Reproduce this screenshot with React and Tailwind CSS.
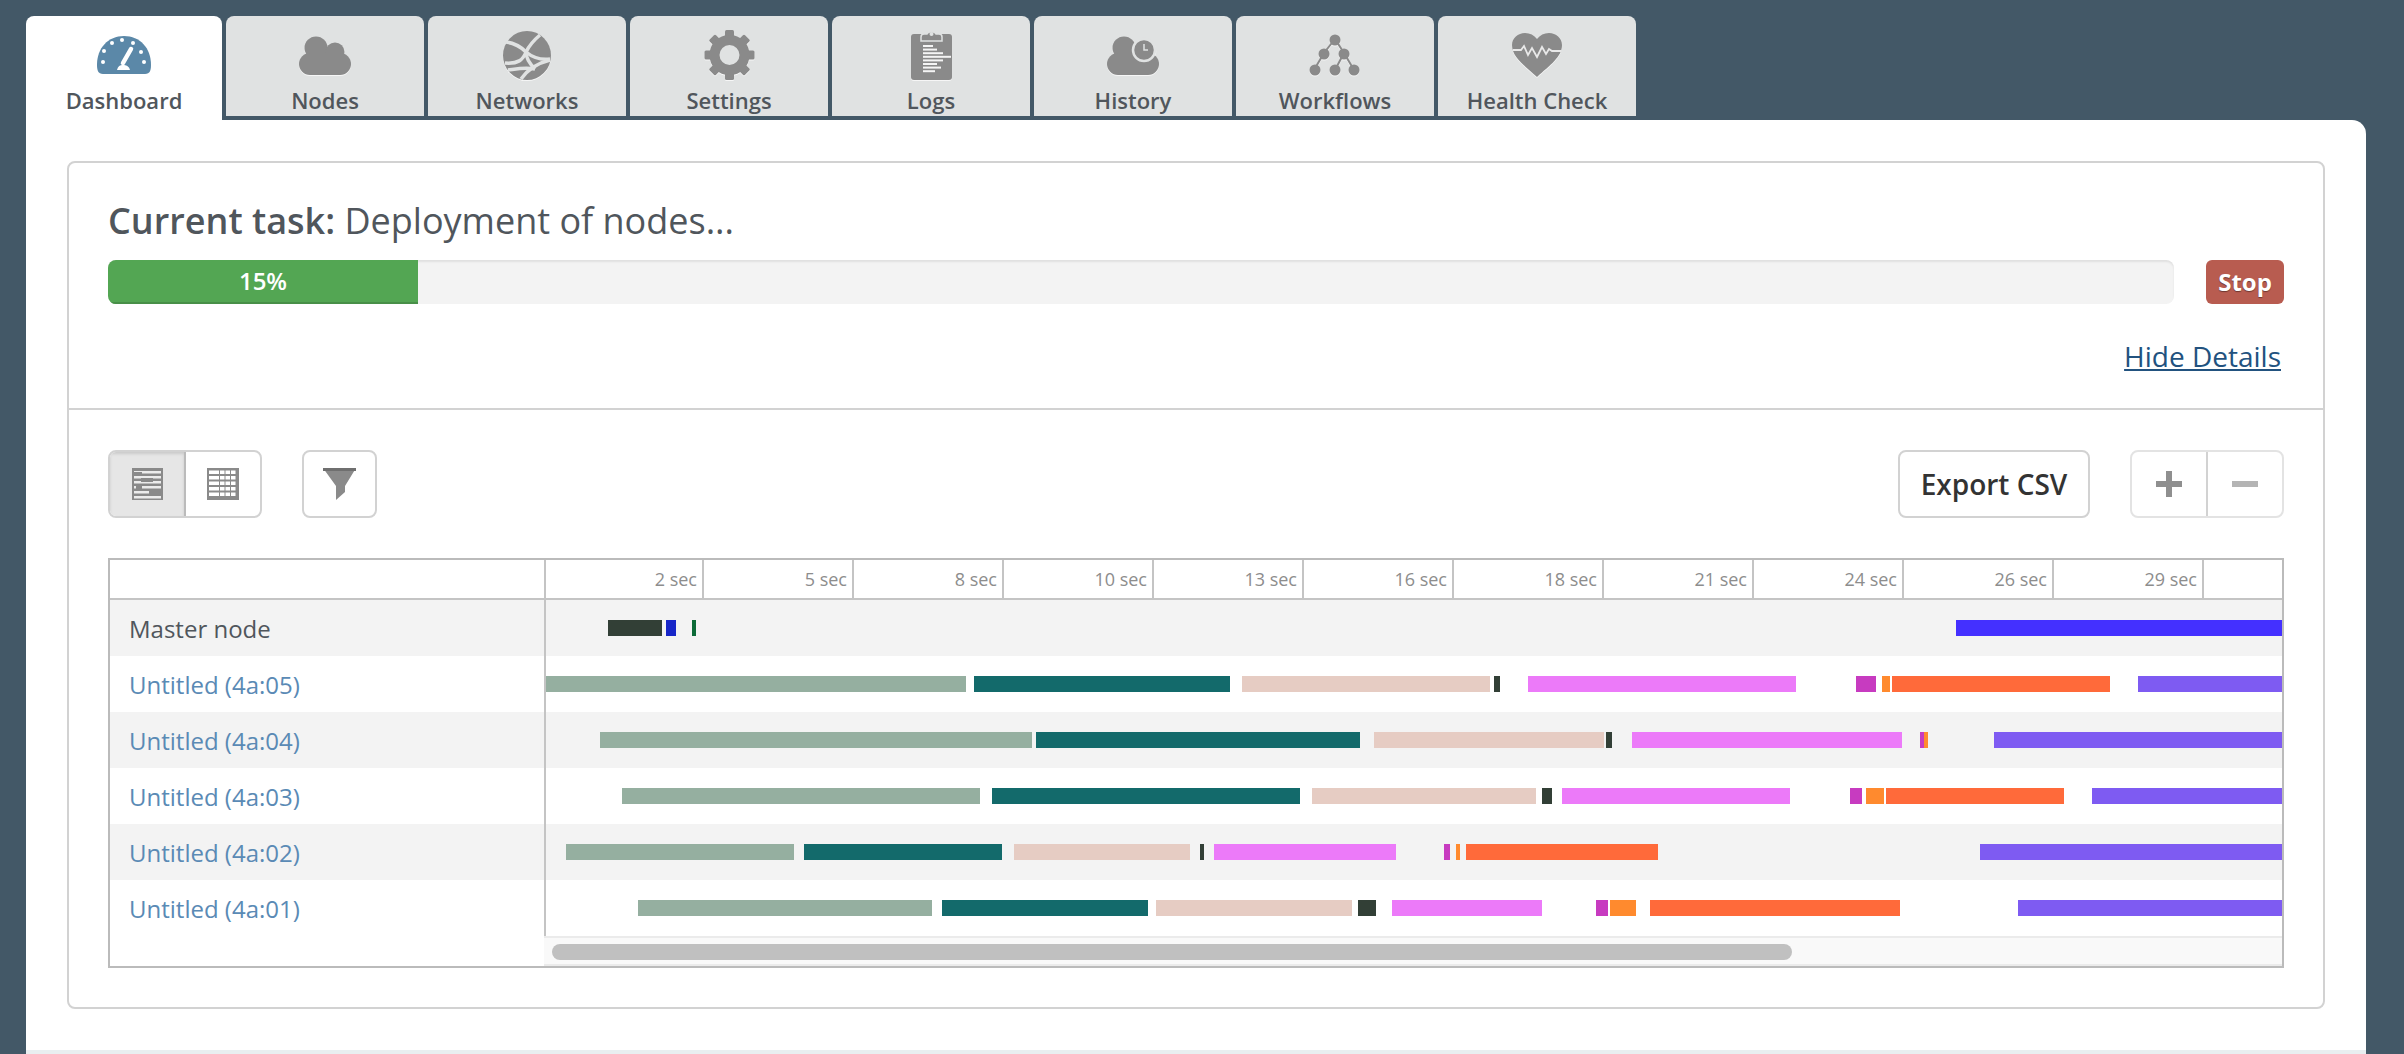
import { Fragment } from 'react';

const C = {
  sage: 'bg-[#95afa0]',
  teal: 'bg-[#136a6b]',
  pink: 'bg-[#e6ccc3]',
  dark: 'bg-[#323f36]',
  magenta: 'bg-[#ec7af9]',
  purple: 'bg-[#c73bc0]',
  orange: 'bg-[#ff8a2e]',
  red: 'bg-[#ff6a3a]',
  violet: 'bg-[#7e5bf2]',
  blue: 'bg-[#1726c8]',
  green: 'bg-[#0c6a37]',
  indigo: 'bg-[#4430ff]',
};

// bar coordinates are page x positions, converted to row offsets below
const CHART_X = 546;
const ROWS = [
  { name: 'Master node', master: true, bars: [['dark', 608, 662], ['blue', 666, 676], ['green', 692, 696], ['indigo', 1956, 2283]] },
  { name: 'Untitled (4a:05)', bars: [['sage', 546, 966], ['teal', 974, 1230], ['pink', 1242, 1490], ['dark', 1494, 1500], ['magenta', 1528, 1796], ['purple', 1856, 1876], ['orange', 1882, 1890], ['red', 1892, 2110], ['violet', 2138, 2283]] },
  { name: 'Untitled (4a:04)', bars: [['sage', 600, 1032], ['teal', 1036, 1360], ['pink', 1374, 1604], ['dark', 1606, 1612], ['magenta', 1632, 1902], ['purple', 1920, 1924], ['orange', 1924, 1928], ['violet', 1994, 2283]] },
  { name: 'Untitled (4a:03)', bars: [['sage', 622, 980], ['teal', 992, 1300], ['pink', 1312, 1536], ['dark', 1542, 1552], ['magenta', 1562, 1790], ['purple', 1850, 1862], ['orange', 1866, 1884], ['red', 1886, 2064], ['violet', 2092, 2283]] },
  { name: 'Untitled (4a:02)', bars: [['sage', 566, 794], ['teal', 804, 1002], ['pink', 1014, 1190], ['dark', 1200, 1204], ['magenta', 1214, 1396], ['purple', 1444, 1450], ['orange', 1456, 1460], ['red', 1466, 1658], ['violet', 1980, 2283]] },
  { name: 'Untitled (4a:01)', bars: [['sage', 638, 932], ['teal', 942, 1148], ['pink', 1156, 1352], ['dark', 1358, 1376], ['magenta', 1392, 1542], ['purple', 1596, 1608], ['orange', 1610, 1636], ['red', 1650, 1900], ['violet', 2018, 2283]] },
];

const TICKS = ['5 sec', '8 sec', '10 sec', '13 sec', '16 sec', '18 sec', '21 sec', '24 sec', '26 sec', '29 sec'];

function Cloud() {
  return (
    <g>
      <circle cx="17" cy="12" r="11.5" />
      <circle cx="36" cy="16" r="9.5" />
      <rect x="0" y="17" width="52" height="22" rx="11" />
    </g>
  );
}

function DashboardIcon() {
  return (
    <svg width="54" height="38" viewBox="0 0 54 38">
      <path d="M0 29C0 12 11 0 27 0s27 12 27 29c0 5-1 9-6 9H6c-5 0-6-4-6-9Z" fill="#5b88a8" />
      <g fill="#fff">
        <circle cx="25" cy="4" r="2" />
        <circle cx="36" cy="7" r="2" />
        <circle cx="15" cy="7" r="2" />
        <circle cx="7" cy="15" r="2" />
        <circle cx="44" cy="16" r="2" />
        <circle cx="6" cy="26" r="2" />
        <circle cx="47" cy="26" r="2" />
        <path d="M20 34c1-4 3-5 6-5s6 1 7 5Z" />
      </g>
      <path d="M26 27l8-14" stroke="#fff" strokeWidth="4.5" strokeLinecap="round" />
    </svg>
  );
}

function NodesIcon() {
  return (
    <svg width="52" height="39" viewBox="0 0 52 39" fill="#8a8a8a">
      <Cloud />
    </svg>
  );
}

function NetworksIcon() {
  return (
    <svg width="48" height="49" viewBox="0 0 48 49">
      <ellipse cx="24" cy="24.5" rx="24" ry="24.5" fill="#8a8a8a" />
      <g fill="none" stroke="#e0e2e2" strokeWidth="3.5">
        <path d="M3 11c8 1 15 5 20 10 6 5 15 8 24 7" />
        <path d="M37 4c-6 5-11 11-14 17-3 8-8 12-21 11" />
        <path d="M23 21c0 6 4 12 9 17" />
        <path d="M47 29c-12 3-22 9-29 19" />
        <path d="M5 39c8-1 17-3 27-1" />
      </g>
    </svg>
  );
}

function SettingsIcon() {
  return (
    <svg width="51" height="50" viewBox="0 0 51 50">
      <g fill="#8a8a8a">
        {[0, 45, 90, 135].map((r) => (
          <rect key={r} x="21" y="0" width="9" height="50" rx="1.5" transform={`rotate(${r} 25.5 25)`} />
        ))}
      </g>
      <circle cx="25.5" cy="25" r="15" fill="#e0e2e2" stroke="#8a8a8a" strokeWidth="10" />
    </svg>
  );
}

function LogsIcon() {
  const lines = [10, 14, 20, 28, 20, 14, 18, 12];
  return (
    <svg width="41" height="50" viewBox="0 0 41 50">
      <rect x="0" y="4" width="41" height="46" rx="3" fill="#8a8a8a" />
      <path d="M10 11V7c0-2 1-3 3-3h3c1-3 8-3 9 0h3c2 0 3 1 3 3v4Z" fill="#8a8a8a" stroke="#e0e2e2" strokeWidth="1.5" />
      <circle cx="20.5" cy="4" r="2" fill="#e0e2e2" />
      {lines.map((w, i) => (
        <rect key={i} x="12" y={15 + i * 3.6} width={w} height="2" fill="#f4f4f4" />
      ))}
    </svg>
  );
}

function HistoryIcon() {
  return (
    <svg width="52" height="39" viewBox="0 0 52 39">
      <g fill="#8a8a8a">
        <Cloud />
      </g>
      <circle cx="37" cy="14" r="11" fill="#8a8a8a" stroke="#e0e2e2" strokeWidth="2.5" />
      <path d="M37 8v6h4" fill="none" stroke="#e0e2e2" strokeWidth="1.5" />
    </svg>
  );
}

function WorkflowsIcon() {
  return (
    <svg width="52" height="43" viewBox="0 0 52 43">
      <path d="M26 5L15 19L5 36M26 5L35 19L26 36M35 19L45 36" fill="none" stroke="#8a8a8a" strokeWidth="2" />
      <g fill="#8a8a8a">
        <circle cx="26" cy="6" r="5.5" />
        <circle cx="15" cy="20" r="5.5" />
        <circle cx="35" cy="20" r="5.5" />
        <circle cx="6" cy="36" r="5.5" />
        <circle cx="26" cy="36" r="5.5" />
        <circle cx="45" cy="36" r="5.5" />
      </g>
    </svg>
  );
}

function HealthIcon() {
  return (
    <svg width="50" height="44" viewBox="0 0 50 44">
      <path d="M25 44C12 32 0 24 0 12 0 5 6 0 13 0c5 0 9 2 12 6 3-4 7-6 12-6 7 0 13 5 13 12 0 12-12 20-25 32Z" fill="#8a8a8a" />
      <path d="M1 17h8l3-4 4 9 4-7 5 9 5-10 4 7 3-5 3 2h9" fill="none" stroke="#e8e8e8" strokeWidth="1.8" />
    </svg>
  );
}

const TABS = [
  ['Dashboard', DashboardIcon],
  ['Nodes', NodesIcon],
  ['Networks', NetworksIcon],
  ['Settings', SettingsIcon],
  ['Logs', LogsIcon],
  ['History', HistoryIcon],
  ['Workflows', WorkflowsIcon],
  ['Health Check', HealthIcon],
];

function GanttIcon() {
  return (
    <svg width="31" height="32" viewBox="0 0 31 32">
      <rect width="31" height="32" fill="#8a8a8a" />
      {[3, 8, 13, 18, 23, 28].map((y) => (
        <rect key={y} x="2" y={y} width="27" height="2.5" fill="#ececec" />
      ))}
      <rect x="2" y="4" width="8" height="4" fill="#8a8a8a" />
      <rect x="9" y="10" width="12" height="4" fill="#8a8a8a" />
      <rect x="4" y="16" width="6" height="6" fill="#8a8a8a" />
      <rect x="17" y="22" width="12" height="5" fill="#8a8a8a" />
    </svg>
  );
}

function GridIcon() {
  return (
    <svg width="32" height="32" viewBox="0 0 32 32">
      <rect width="32" height="32" fill="#8a8a8a" />
      {[2, 7.5, 13, 18.5, 24].map((y) => (
        <Fragment key={y}>
          {[2, 13, 18.5, 24].map((x, i) => (
            <rect key={x} x={x} y={y + 0.5} width={i === 0 ? 10 : 4.5} height="3.5" fill="#fff" />
          ))}
        </Fragment>
      ))}
    </svg>
  );
}

function FunnelIcon() {
  return (
    <svg width="33" height="32" viewBox="0 0 33 32">
      <path d="M0 0h33L22 18v6l-9 8V18Z" fill="#8a8a8a" />
      <rect width="33" height="3" fill="#6f6f6f" />
    </svg>
  );
}

function Tab({ label, Icon, active }) {
  return (
    <div className={`rounded-t-lg flex flex-col items-center ${active ? 'w-[196px] h-[104px] bg-white' : 'w-[198px] h-[100px] bg-[#e0e2e2]'}`}>
      <div className="h-[66px] shrink-0 w-full flex items-center justify-center pt-[12px] [&_svg]:drop-shadow-[0_1px_0_rgba(255,255,255,0.7)]">
        <Icon />
      </div>
      <span className="text-[22px] leading-[36px] font-semibold text-[#50565c]">{label}</span>
    </div>
  );
}

function GanttRow({ row, index }) {
  return (
    <div className={`flex h-[56px] ${index % 2 === 0 ? 'bg-[#f3f3f3]' : 'bg-white'}`}>
      <div className={`w-[436px] shrink-0 border-r-2 border-[#c4c4c4] pl-[19px] pt-[2px] flex items-center text-[24px] ${row.master ? 'text-[#50565c]' : 'text-[#5a8ab5]'}`}>
        {row.name}
      </div>
      <div className="relative flex-1 overflow-hidden">
        {row.bars.map(([color, start, end], i) => (
          <div
            key={i}
            className={`absolute top-[20px] h-[16px] ${C[color]}`}
            style={{ left: start - CHART_X, width: end - start }}
          />
        ))}
      </div>
    </div>
  );
}

export default function App() {
  return (
    <div className="h-[1054px] overflow-hidden bg-[#435867] pt-[16px] pl-[26px] pr-[38px] flex flex-col font-['Open_Sans',sans-serif]">
      <div className="flex gap-[4px] h-[104px] shrink-0">
        {TABS.map(([label, Icon], i) => (
          <Tab key={label} label={label} Icon={Icon} active={i === 0} />
        ))}
      </div>

      <div className="flex-1 flex flex-col bg-white rounded-tr-[14px]">
        <div className="flex-1 px-[41px] pt-[41px]">
          <div className="h-[848px] border-2 border-[#d2d2d2] rounded-lg">
            {/* Task progress */}
            <div className="h-[247px] px-[39px] pt-[34px] border-b-2 border-[#d2d2d2]">
              <div className="h-[48px] leading-[48px] text-[36px] text-[#50565c]">
                <span className="font-semibold">Current task:</span> Deployment of nodes...
              </div>
              <div className="mt-[15px] flex gap-[32px]">
                <div className="flex-1 h-[44px] rounded-lg bg-[#f3f3f3] shadow-[inset_0_2px_2px_rgba(0,0,0,0.08)] overflow-hidden">
                  <div className="w-[310px] h-full bg-[#53a653] border-b-2 border-[#488f48] flex items-center justify-center text-white text-[24px] font-semibold">
                    15%
                  </div>
                </div>
                <button className="w-[78px] h-[44px] rounded-md bg-[#b85c50] text-white text-[24px] font-bold [text-shadow:0_1px_1px_rgba(0,0,0,0.4)]">
                  Stop
                </button>
              </div>
              <div className="mt-[34px] pr-[3px] text-right">
                <a className="text-[28px] leading-[36px] text-[#22527f] underline">Hide Details</a>
              </div>
            </div>

            {/* Timeline */}
            <div className="px-[39px] pt-[40px]">
              <div className="flex items-center justify-between h-[68px]">
                <div className="flex gap-[40px]">
                  <div className="flex h-[68px] w-[154px] border-2 border-[#d2d2d2] rounded-lg overflow-hidden">
                    <div className="w-[76px] bg-[#e6e6e6] border-r-2 border-[#bbbbbb] shadow-[inset_0_2px_3px_rgba(0,0,0,0.12)] flex items-center justify-center">
                      <GanttIcon />
                    </div>
                    <div className="flex-1 flex items-center justify-center">
                      <GridIcon />
                    </div>
                  </div>
                  <div className="w-[75px] h-[68px] border-2 border-[#d2d2d2] rounded-lg flex items-center justify-center">
                    <FunnelIcon />
                  </div>
                </div>
                <div className="flex gap-[40px]">
                  <button className="w-[192px] h-[68px] border-2 border-[#d2d2d2] rounded-lg text-[28px] font-semibold text-[#333333]">
                    Export CSV
                  </button>
                  <div className="flex w-[154px] h-[68px] border-2 border-[#e3e3e3] rounded-lg overflow-hidden">
                    <div className="w-[76px] border-r-2 border-[#d2d2d2] flex items-center justify-center">
                      <svg width="26" height="26" viewBox="0 0 26 26" fill="#8f8f8f">
                        <path d="M10 0h6v10h10v6H16v10h-6V16H0v-6h10Z" />
                      </svg>
                    </div>
                    <div className="flex-1 flex items-center justify-center">
                      <div className="w-[26px] h-[6px] bg-[#b4b4b4]" />
                    </div>
                  </div>
                </div>
              </div>

              <div className="mt-[40px] h-[410px] border-2 border-[#bbbbbb]">
                <div className="flex h-[40px] border-b-2 border-[#c4c4c4]">
                  <div className="w-[436px] shrink-0 border-r-2 border-[#c4c4c4]" />
                  <div className="w-[158px] shrink-0 border-r-2 border-[#c4c4c4] pr-[5px] flex items-center justify-end text-[18px] text-[#8d8d8d]">
                    2 sec
                  </div>
                  {TICKS.map((t) => (
                    <div key={t} className="w-[150px] shrink-0 border-r-2 border-[#c4c4c4] pr-[5px] flex items-center justify-end text-[18px] text-[#8d8d8d]">
                      {t}
                    </div>
                  ))}
                </div>
                {ROWS.map((row, i) => (
                  <GanttRow key={row.name} row={row} index={i} />
                ))}
                <div className="flex h-[30px]">
                  <div className="w-[434px] shrink-0" />
                  <div className="flex-1 bg-[#f9f9f9] border-t-2 border-b-2 border-[#ebebeb] pt-[6px] pl-[8px]">
                    <div className="w-[1240px] h-[16px] rounded-lg bg-[#c0c0c0]" />
                  </div>
                </div>
              </div>
            </div>
          </div>
        </div>
        <div className="h-[4px] bg-[#e9eef0]" />
      </div>
    </div>
  );
}
